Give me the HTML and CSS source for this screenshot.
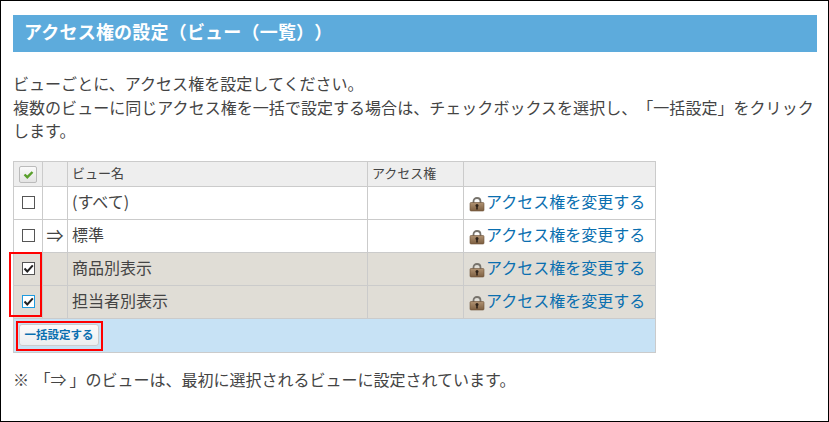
FILE: index.html
```html
<!DOCTYPE html>
<html lang="ja">
<head>
<meta charset="utf-8">
<title>アクセス権の設定</title>
<link rel="stylesheet" href="styles.css">
</head>
<body>
<svg class="defs" width="0" height="0" aria-hidden="true">
  <defs>
    <linearGradient id="lockBody" x1="0" y1="0" x2="0" y2="1">
      <stop offset="0" stop-color="#b09272"/>
      <stop offset="1" stop-color="#7d5f41"/>
    </linearGradient>
    <symbol id="lock" viewBox="0 0 16 16">
      <path d="M4.500 8V5.500C4.500 3.400 6 2 8 2s3.500 1.400 3.500 3.500V8" fill="none" stroke="#77736c" stroke-width="1.800"/>
      <rect x="1" y="6.500" width="14" height="8.500" rx="1" fill="url(#lockBody)" stroke="#6b5038" stroke-width=".6"/>
      <circle cx="8" cy="9.500" r="1.500" fill="#2e2218"/>
      <rect x="7.200" y="9.500" width="1.600" height="4" fill="#2e2218"/>
    </symbol>
    <symbol id="tick" viewBox="0 0 11 11">
      <path d="M1.500 5.500L4.300 8.500L9.800 2.400" fill="none" stroke="#222" stroke-width="2"/>
    </symbol>
  </defs>
</svg>
<main class="frame">
  <h1 class="banner">アクセス権の設定（ビュー（一覧））</h1>
  <p class="intro">ビューごとに、アクセス権を設定してください。<br>複数のビューに同じアクセス権を一括で設定する場合は、チェックボックスを選択し、「一括設定」をクリックします。</p>
  <div class="table-wrap">
    <table class="views">
      <colgroup>
        <col class="c-check"><col class="c-mark"><col class="c-name"><col class="c-access"><col class="c-link">
      </colgroup>
      <thead>
        <tr>
          <th class="center"><span class="all-check"><svg viewBox="0 0 11 11" width="11" height="11"><path d="M1.500 5.500L4.300 8.200L9.500 3" fill="none" stroke="#5aa02c" stroke-width="2.400"/></svg></span></th>
          <th></th>
          <th>ビュー名</th>
          <th>アクセス権</th>
          <th></th>
        </tr>
      </thead>
      <tbody>
        <tr>
          <td class="center"><span class="box"></span></td>
          <td></td>
          <td>(すべて)</td>
          <td></td>
          <td class="link-cell"><svg class="lock"><use href="#lock"/></svg><a href="#">アクセス権を変更する</a></td>
        </tr>
        <tr>
          <td class="center"><span class="box"></span></td>
          <td class="arrow">⇒</td>
          <td>標準</td>
          <td></td>
          <td class="link-cell"><svg class="lock"><use href="#lock"/></svg><a href="#">アクセス権を変更する</a></td>
        </tr>
        <tr class="selected">
          <td class="center"><span class="box"><svg class="tick"><use href="#tick"/></svg></span></td>
          <td></td>
          <td>商品別表示</td>
          <td></td>
          <td class="link-cell"><svg class="lock"><use href="#lock"/></svg><a href="#">アクセス権を変更する</a></td>
        </tr>
        <tr class="selected">
          <td class="center"><span class="box focus"><svg class="tick"><use href="#tick"/></svg></span></td>
          <td></td>
          <td>担当者別表示</td>
          <td></td>
          <td class="link-cell"><svg class="lock"><use href="#lock"/></svg><a href="#">アクセス権を変更する</a></td>
        </tr>
      </tbody>
      <tfoot>
        <tr>
          <td colspan="5" class="foot"><button class="bulk" type="button">一括設定する</button></td>
        </tr>
      </tfoot>
    </table>
    <div class="mark mark-checks"></div>
    <div class="mark mark-button"></div>
  </div>
  <p class="note">※ 「<span class="note-arrow">⇒</span>」のビューは、最初に選択されるビューに設定されています。</p>
</main>
</body>
</html>
```
FILE: styles.css
```css
* { box-sizing: border-box; }
html, body { margin: 0; padding: 0; background: #fff; }
body {
  font-family: "Noto Sans CJK JP", "Noto Sans", sans-serif;
  color: #444;
  text-spacing-trim: space-all;
}
.defs { position: absolute; }
.frame {
  width: 829px;
  height: 422px;
  border: 1px solid #000;
  padding: 14px 11px 0 12px;
  overflow: hidden;
}
.banner {
  margin: 0;
  height: 37px;
  padding-left: 11px;
  background: #5dabdc;
  color: #fff;
  font-size: 18px;
  font-weight: 700;
  letter-spacing: .2px;
  line-height: 32px;
}
.intro {
  margin: 20px 0 0;
  font-size: 16px;
  letter-spacing: .04px;
  line-height: 23.500px;
}
.table-wrap {
  position: relative;
  width: 642px;
  margin-top: 18px;
}
.views {
  width: 642px;
  border-collapse: collapse;
  table-layout: fixed;
  font-size: 16px;
}
.c-check { width: 29px; }
.c-mark { width: 25px; }
.c-name { width: 300px; }
.c-access { width: 96px; }
.c-link { width: 192px; }
.views th, .views td {
  border: 1px solid #cbcbcb;
  padding: 0 4px 4px;
  overflow: hidden;
  white-space: nowrap;
}
.views th {
  height: 25px;
  padding-bottom: 2px;
  background: #eee;
  font-size: 13px;
  font-weight: 400;
  text-align: left;
}
.views td { height: 33px; background: #fff; }
.views td.center { padding: 0 0 5px; text-align: center; }
.views th.center { padding: 0; text-align: center; }
.selected td { background: #e0ddd6 !important; }
.arrow { font-size: 17px; text-align: center; padding: 0 0 3px !important; }
.note-arrow { display: inline-block; width: 16px; margin-right: 3px; text-align: center; }
.box {
  display: inline-flex;
  align-items: center;
  justify-content: center;
  width: 13px;
  height: 13px;
  border: 1px solid #555;
  background: #fff;
  vertical-align: middle;
}
.box.focus { border-color: #1e9be0; }
.tick { width: 11px; height: 11px; }
.all-check {
  display: inline-flex;
  align-items: center;
  justify-content: center;
  width: 18px;
  height: 17px;
  border: 1px solid #bbb;
  border-radius: 2px;
  background: linear-gradient(#fafafa, #e4e4e4);
  vertical-align: middle;
}
.link-cell { padding-left: 5px !important; }
.lock {
  width: 16px;
  height: 16px;
  margin-right: 1px;
  vertical-align: -4px;
}
.link-cell a { color: #0a6fb0; text-decoration: none; }
.views td.foot {
  height: 34px;
  padding: 0 0 0 5px;
  background: #c7e2f5;
}
.bulk {
  display: block;
  width: 80px;
  height: 22px;
  padding: 0 0 2px;
  border: 1px solid #ccc;
  border-radius: 3px;
  background: linear-gradient(#fbfbfb, #ebeef0);
  color: #0a6fb0;
  font-family: inherit;
  font-size: 11.500px;
  font-weight: 700;
  line-height: 18px;
}
.mark {
  position: absolute;
  border: 2px solid #f00;
  pointer-events: none;
}
.mark-checks { left: -4px; top: 91px; width: 33px; height: 65px; }
.mark-button { left: 3px; top: 160px; width: 87px; height: 30px; }
.note {
  margin: 15px 0 0;
  font-size: 16px;
  word-spacing: 2px;
  line-height: 22px;
}
```
